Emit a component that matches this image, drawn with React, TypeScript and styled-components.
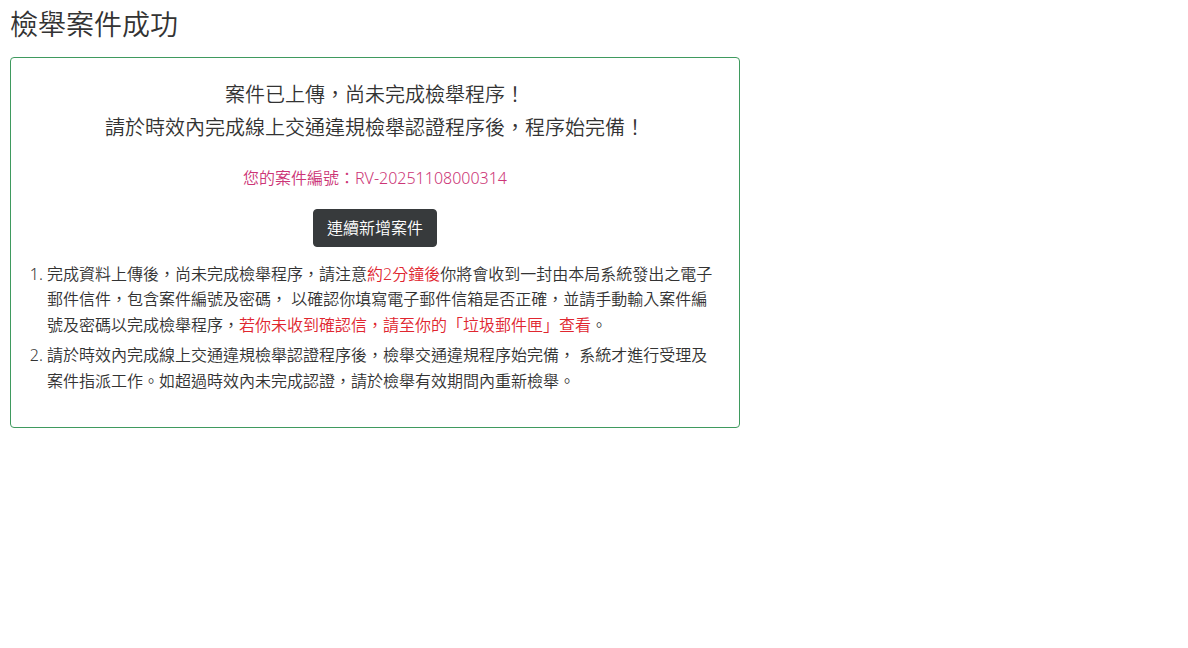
import styled, { createGlobalStyle } from 'styled-components';

const GlobalStyle = createGlobalStyle`
  *, *::before, *::after {
    box-sizing: border-box;
  }
  body {
    margin: 0;
    background: #fff;
    color: #333;
    font-family: "Noto Sans", "Noto Sans CJK TC", sans-serif;
    font-weight: 350;
  }
`;

const Page = styled.div`
  padding: 8px 10px;
`;

const PageTitle = styled.h2`
  font-size: 28px;
  font-weight: 350;
  line-height: 1.2;
  color: #333;
  margin: 0 0 15px 0;
`;

const ResultCard = styled.div`
  width: 730px;
  border: 1px solid #3f9a5e;
  border-radius: 4px;
  padding: 20px 16px 16px;
`;

const Lead = styled.p`
  font-size: 20px;
  line-height: 33px;
  text-align: center;
  margin: 0 0 22px 0;
`;

const CaseNumber = styled.p`
  font-size: 16px;
  line-height: 24px;
  text-align: center;
  color: #cc3576;
  margin: 0 0 19px 0;
`;

const ButtonRow = styled.div`
  display: flex;
  justify-content: center;
  margin-bottom: 15px;
`;

const DarkButton = styled.button`
  font-family: inherit;
  font-weight: 350;
  font-size: 16px;
  line-height: 24px;
  padding: 6px 13px;
  color: #fff;
  background: #373a3c;
  border: 1px solid #373a3c;
  border-radius: 4px;
  cursor: pointer;
`;

const NoticeList = styled.ol`
  margin: 0 0 16px 0;
  padding-left: 20px;
  font-size: 16px;
  line-height: 25.6px;

  li {
    margin-bottom: 5px;
  }
`;

const Warn = styled.span`
  color: #e0262f;
`;

export default function App() {
  return (
    <>
      <GlobalStyle />
      <Page>
        <PageTitle>檢舉案件成功</PageTitle>
        <ResultCard>
          <Lead>
            案件已上傳，尚未完成檢舉程序！
            <br />
            請於時效內完成線上交通違規檢舉認證程序後，程序始完備！
          </Lead>
          <CaseNumber>您的案件編號：RV-20251108000314</CaseNumber>
          <ButtonRow>
            <DarkButton>連續新增案件</DarkButton>
          </ButtonRow>
          <NoticeList>
            <li>
              完成資料上傳後，尚未完成檢舉程序，請注意<Warn>約2分鐘後</Warn>
              你將會收到一封由本局系統發出之電子郵件信件，包含案件編號及密碼， 以確認你填寫電子郵件信箱是否正確，並請手動輸入案件編號及密碼以完成檢舉程序，
              <Warn>若你未收到確認信，請至你的「垃圾郵件匣」查看</Warn>。
            </li>
            <li>
              請於時效內完成線上交通違規檢舉認證程序後，檢舉交通違規程序始完備， 系統才進行受理及案件指派工作。如超過時效內未完成認證，請於檢舉有效期間內重新檢舉。
            </li>
          </NoticeList>
        </ResultCard>
      </Page>
    </>
  );
}
